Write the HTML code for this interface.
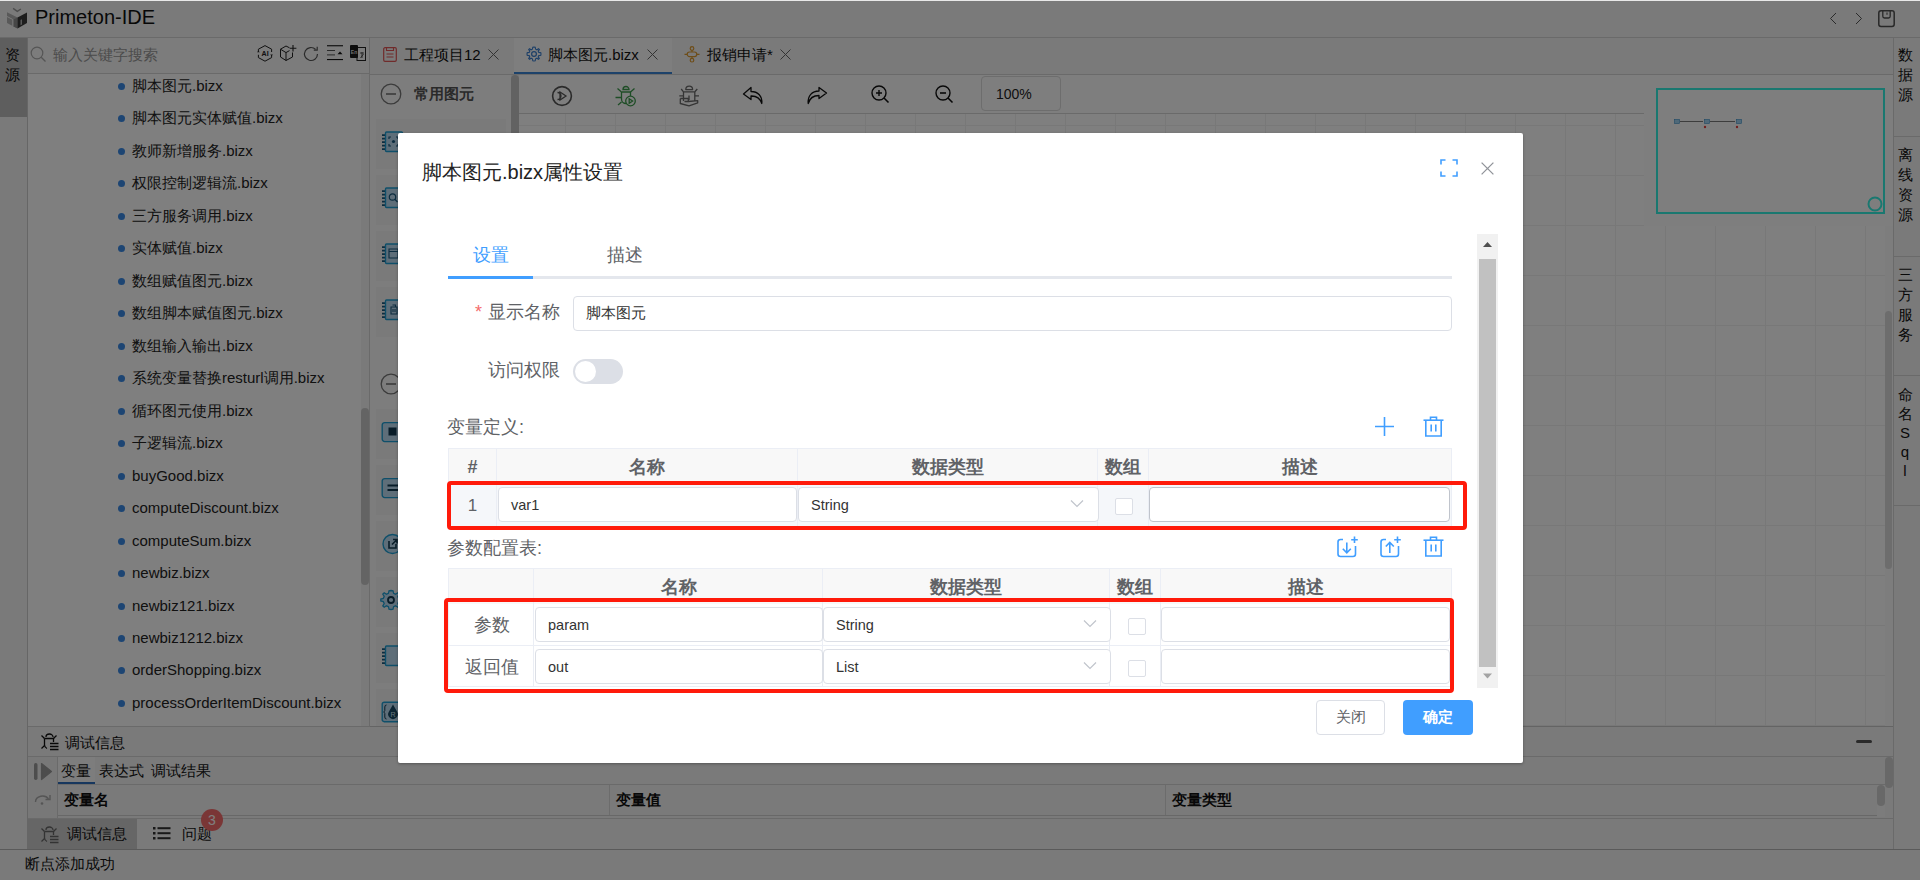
<!DOCTYPE html>
<html><head><meta charset="utf-8">
<style>
*{box-sizing:border-box;margin:0;padding:0}
html,body{width:1920px;height:880px;overflow:hidden;background:#fff;font-family:"Liberation Sans",sans-serif;color:#333}
.a{position:absolute}
.bd{border-color:#d4d4d4;border-style:solid;border-width:0}
svg{display:block}
#app{position:absolute;left:0;top:0;width:1920px;height:880px}
.tree div{position:absolute;left:132px;font-size:15px;color:#222;height:20px;line-height:20px;white-space:nowrap}
.tree div:before{content:"";position:absolute;left:-14px;top:7px;width:7px;height:7px;border-radius:50%;background:#3a8ae6}
.th{text-align:center;font-size:18px;line-height:24px;font-weight:bold;color:#606266}
.inp{border:1px solid #dcdfe6;border-radius:4px;background:#fff}
.it{font-size:14.5px;line-height:20px;color:#333}
.cb{width:18px;height:17px;border:1px solid #dcdfe6;border-radius:2px;background:#fff}
#ov{position:absolute;left:0;top:0;width:1920px;height:880px;background:rgba(0,0,0,.5)}
</style></head><body>
<div id="app">
  <!-- title bar -->
  <div class="a bd" style="left:0;top:0;width:1920px;height:38px;background:#f4f4f4;border-bottom-width:1px"></div>
  <div class="a" style="left:35px;top:5px;font-size:20px;line-height:24px;color:#111">Primeton-IDE</div>
  <!-- left strip -->
  <div class="a" style="left:0;top:38px;width:28px;height:811px;background:#f4f4f4;border-right:1px solid #cccccc"></div>
  <div class="a" style="left:0;top:38px;width:27px;height:79px;background:#bdbdbd"></div>
  <div class="a" style="left:5px;top:45px;width:16px;font-size:15px;line-height:20px;color:#111">资源</div>
  <!-- left panel -->
  <div class="a bd" style="left:28px;top:38px;width:342px;height:689px;background:#fff;border-right-width:1px;border-bottom-width:1px"></div>
  <div class="a bd" style="left:28px;top:38px;width:341px;height:36px;background:#f8f8f8;border-bottom-width:1px"></div>
  <div class="a" style="left:53px;top:45px;font-size:15px;line-height:20px;color:#999">输入关键字搜索</div>
  <div class="tree">
    <div style="top:76px">脚本图元.bizx</div>
    <div style="top:108px">脚本图元实体赋值.bizx</div>
    <div style="top:141px">教师新增服务.bizx</div>
    <div style="top:173px">权限控制逻辑流.bizx</div>
    <div style="top:206px">三方服务调用.bizx</div>
    <div style="top:238px">实体赋值.bizx</div>
    <div style="top:271px">数组赋值图元.bizx</div>
    <div style="top:303px">数组脚本赋值图元.bizx</div>
    <div style="top:336px">数组输入输出.bizx</div>
    <div style="top:368px">系统变量替换resturl调用.bizx</div>
    <div style="top:401px">循环图元使用.bizx</div>
    <div style="top:433px">子逻辑流.bizx</div>
    <div style="top:466px">buyGood.bizx</div>
    <div style="top:498px">computeDiscount.bizx</div>
    <div style="top:531px">computeSum.bizx</div>
    <div style="top:563px">newbiz.bizx</div>
    <div style="top:596px">newbiz121.bizx</div>
    <div style="top:628px">newbiz1212.bizx</div>
    <div style="top:660px">orderShopping.bizx</div>
    <div style="top:693px">processOrderItemDiscount.bizx</div>
  </div>

  <!-- title logo -->
  <svg class="a" style="left:6px;top:7px" width="23" height="23" viewBox="0 0 23 23">
    <path d="M7.1 1.4 L11.3 4.3 L14.9 2" fill="none" stroke="#9a9a9a" stroke-width="1.4"/>
    <path d="M1 5.2 L11.5 10.6 L11.5 21.5 L1 16 Z" fill="#b2b2b2"/>
    <path d="M7.5 12.5 L11.5 10.6 L11.5 21.5 L7.5 19.5 Z" fill="#8e8e8e"/>
    <path d="M11.5 10.6 L21 5.5 L21 16 L11.5 21.5 Z" fill="#3a3a3a"/>
    <path d="M1 9.5 L6.8 12.5 L6.8 19" fill="none" stroke="#f4f4f4" stroke-width="1"/>
    <path d="M14.5 13 L16 12.3 L16 17.5 L14.5 18.3 Z" fill="#b0b0b0"/>
  </svg>
  <!-- title right icons -->
  <svg class="a" style="left:1827px;top:11px" width="12" height="16" viewBox="0 0 12 16"><path d="M9 2 L3.5 7.5 L9 13" fill="none" stroke="#555" stroke-width="1"/></svg>
  <svg class="a" style="left:1853px;top:11px" width="12" height="16" viewBox="0 0 12 16"><path d="M3 2 L8.5 7.5 L3 13" fill="none" stroke="#555" stroke-width="1"/></svg>
  <svg class="a" style="left:1877px;top:9px" width="19" height="19" viewBox="0 0 19 19"><rect x="1.8" y="1.8" width="15.4" height="15.6" rx="2.2" fill="none" stroke="#505050" stroke-width="1.5"/><path d="M5.8 1.8 V7.3 Q5.8 9 7.5 9 H11.5 Q13.2 9 13.2 7.3 V1.8" fill="none" stroke="#505050" stroke-width="1.3"/><path d="M10 3.5 V5.8" stroke="#505050" stroke-width="1.1"/></svg>
  <!-- search icons -->
  <svg class="a" style="left:30px;top:46px" width="17" height="17" viewBox="0 0 17 17"><circle cx="7" cy="7" r="5.8" fill="none" stroke="#aaa" stroke-width="1.2"/><path d="M11.2 11.2 L15.5 15.5" stroke="#aaa" stroke-width="1.3"/></svg>
  <svg class="a" style="left:257px;top:45px" width="17" height="17" viewBox="0 0 17 17"><path d="M8 0.6 L14.6 4.2 V7 M14.6 10 V12.6 L8 16.2 L1.4 12.6 V9.8 M1.4 6.8 V4.2 L8 0.6" fill="none" stroke="#222" stroke-width="1"/><path d="M0 7.2 L1.4 5.8 L2.8 7.2 Z M13.2 9.6 L14.6 11 L16 9.6 Z" fill="#222"/><text x="8.1" y="11.2" font-size="7" font-weight="bold" text-anchor="middle" fill="#222" font-family="Liberation Sans">AI</text></svg>
  <svg class="a" style="left:280px;top:45px" width="17" height="17" viewBox="0 0 17 17"><path d="M9.5 2.8 L6 1 L0.5 4.2 V12 L6 15.5 L12.5 12 V7.5 M0.5 4.2 L6 7.6 L9.5 5.6 M6 7.6 V15.5" fill="none" stroke="#222" stroke-width="1"/><path d="M13 0 V6.5 M9.8 3.2 H16.4" stroke="#222" stroke-width="1.1"/></svg>
  <svg class="a" style="left:303px;top:46px" width="16" height="16" viewBox="0 0 16 16"><path d="M14.5 8 A6.5 6.5 0 1 1 12.6 3.4" fill="none" stroke="#555" stroke-width="1.2"/><path d="M14.2 0.8 V4.2 H10.8" fill="none" stroke="#555" stroke-width="1.2"/></svg>
  <svg class="a" style="left:327px;top:45px" width="16" height="16" viewBox="0 0 16 16"><rect x="0" y="0.2" width="16" height="1.1" fill="#111"/><rect x="0" y="14" width="16" height="1.1" fill="#111"/><rect x="0" y="5" width="8" height="1" fill="#555"/><rect x="0" y="9.4" width="8" height="1" fill="#555"/><path d="M10.5 9.2 L13 6.4 L15.5 9.2 Z" fill="#111"/></svg>
  <svg class="a" style="left:350px;top:45px" width="16" height="16" viewBox="0 0 16 16"><rect x="7" y="2.5" width="8.5" height="13" fill="none" stroke="#222" stroke-width="1"/><rect x="0" y="0" width="8" height="13" rx="1" fill="#1a1a1a"/><text x="4" y="8.5" font-size="5" font-weight="bold" text-anchor="middle" fill="#ddd" font-family="Liberation Sans">En</text><path d="M10 8 H14 M12 7 V13 M10.5 13 L13.5 9" stroke="#333" stroke-width="0.8"/></svg>
  <!-- left panel scrollbar -->
  <div class="a" style="left:361px;top:74px;width:8px;height:652px;background:#f4f4f4"></div>
  <div class="a" style="left:361px;top:408px;width:8px;height:177px;background:#c9c9c9;border-radius:4px"></div>

  <!-- editor tab bar -->
  <div class="a bd" style="left:370px;top:38px;width:1523px;height:37px;background:#f4f4f4;border-bottom-width:1px"></div>
  <div class="a" style="left:514px;top:38px;width:158px;height:36px;background:#fdfdfd"></div>
  <div class="a" style="left:514px;top:72px;width:158px;height:2px;background:#3a84d4"></div>
  <svg class="a" style="left:383px;top:47px" width="14" height="15" viewBox="0 0 14 15"><path d="M2 0.7 H12 A1.3 1.3 0 0 1 13.3 2 V13 A1.3 1.3 0 0 1 12 14.3 H2 A1.3 1.3 0 0 1 0.7 13 V2 A1.3 1.3 0 0 1 2 0.7 Z" fill="none" stroke="#e05656" stroke-width="1.2"/><path d="M3.5 0.7 V3.5 H10.5 V0.7 M3.5 7 H10.5 M3.5 10 H10.5" fill="none" stroke="#e05656" stroke-width="1.1"/></svg>
  <div class="a" style="left:404px;top:45px;font-size:15px;line-height:20px;color:#111">工程项目12</div>
  <svg class="a" style="left:488px;top:49px" width="11" height="11" viewBox="0 0 11 11"><path d="M0.5 0.5 L10.5 10.5 M10.5 0.5 L0.5 10.5" stroke="#666" stroke-width="1"/></svg>
  <svg class="a" style="left:526px;top:46px" width="16" height="16" viewBox="0 0 16 16"><path d="M8 1 L9.2 1.2 L9.6 3.2 L10.9 3.8 L12.6 2.7 L13.4 3.5 L13.3 3.6 L12.2 5.1 L12.8 6.4 L14.8 6.8 L15 8 L14.8 9.2 L12.8 9.6 L12.2 10.9 L13.3 12.5 L12.5 13.3 L10.9 12.2 L9.6 12.8 L9.2 14.8 L8 15 L6.8 14.8 L6.4 12.8 L5.1 12.2 L3.5 13.3 L2.7 12.5 L3.8 10.9 L3.2 9.6 L1.2 9.2 L1 8 L1.2 6.8 L3.2 6.4 L3.8 5.1 L2.7 3.5 L3.5 2.7 L5.1 3.8 L6.4 3.2 L6.8 1.2 Z" fill="none" stroke="#3a7fd0" stroke-width="1.1"/><circle cx="8" cy="8" r="2.4" fill="none" stroke="#3a7fd0" stroke-width="1.2"/></svg>
  <div class="a" style="left:548px;top:45px;font-size:15px;line-height:20px;color:#111">脚本图元.bizx</div>
  <svg class="a" style="left:647px;top:49px" width="11" height="11" viewBox="0 0 11 11"><path d="M0.5 0.5 L10.5 10.5 M10.5 0.5 L0.5 10.5" stroke="#666" stroke-width="1"/></svg>
  <svg class="a" style="left:684px;top:46px" width="16" height="17" viewBox="0 0 16 17"><g fill="none" stroke="#dc9a30" stroke-width="1.2"><circle cx="8" cy="2.5" r="1.8"/><path d="M8 4.3 V6"/><rect x="3.2" y="6" width="9.6" height="4.6" rx="2.3"/><path d="M8 10.6 V12.4"/><circle cx="8" cy="14.2" r="1.8"/><path d="M0.5 8.3 H3.2 M12.8 8.3 H15.5"/></g></svg>
  <div class="a" style="left:707px;top:45px;font-size:15px;line-height:20px;color:#111">报销申请*</div>
  <svg class="a" style="left:780px;top:49px" width="11" height="11" viewBox="0 0 11 11"><path d="M0.5 0.5 L10.5 10.5 M10.5 0.5 L0.5 10.5" stroke="#666" stroke-width="1"/></svg>

  <!-- palette -->
  <div class="a bd" style="left:370px;top:75px;width:149px;height:652px;background:#fafafa;border-bottom-width:1px"></div>
  <svg class="a" style="left:380px;top:83px" width="22" height="22" viewBox="0 0 22 22"><circle cx="11" cy="11" r="9.8" fill="none" stroke="#777" stroke-width="1.3"/><path d="M6 11 H16" stroke="#777" stroke-width="1.6"/></svg>
  <div class="a" style="left:414px;top:84px;font-size:15px;line-height:20px;font-weight:bold;color:#555">常用图元</div>
  <div class="a" style="left:511px;top:75px;width:8px;height:651px;background:#efefef"></div>
  <div class="a" style="left:511px;top:75px;width:8px;height:300px;background:#c4c4c4;border-radius:4px"></div>
  
<div class="a" style="left:370px;top:75px;width:141px;height:651px;overflow:hidden"><div class="a" style="left:6px;top:44px;width:130px;height:50px;background:#f4f4f4"></div><div class="a" style="left:6px;top:100px;width:130px;height:50px;background:#f4f4f4"></div><div class="a" style="left:6px;top:156px;width:130px;height:50px;background:#f4f4f4"></div><div class="a" style="left:6px;top:212px;width:130px;height:50px;background:#f4f4f4"></div><div class="a" style="left:6px;top:334px;width:130px;height:50px;background:#f4f4f4"></div><div class="a" style="left:6px;top:390px;width:130px;height:50px;background:#f4f4f4"></div><div class="a" style="left:6px;top:446px;width:130px;height:50px;background:#f4f4f4"></div><div class="a" style="left:6px;top:502px;width:130px;height:50px;background:#f4f4f4"></div><div class="a" style="left:6px;top:558px;width:130px;height:50px;background:#f4f4f4"></div><div class="a" style="left:6px;top:614px;width:130px;height:50px;background:#f4f4f4"></div></div>
<svg class="a" style="left:380px;top:131px" width="24" height="22" viewBox="0 0 24 22"><g fill="#1a5a80"><path d="M2 3.2 H5.5 V5 H2 Z M2 6.7 H5.5 V8.5 H2 Z M2 10.2 H5.5 V12 H2 Z M2 13.7 H5.5 V15.5 H2 Z M2 17.2 H5.5 V19 H2 Z"/></g><rect x="5.5" y="1" width="17" height="19.5" rx="1" fill="#bcdcf2" stroke="#1e9fd4" stroke-width="1.4"/><path d="M9 8 V6 H11 M16 6 H18 V8 M18 13 V15 H16 M11 15 H9 V13" fill="none" stroke="#1a5a80" stroke-width="1.2"/><circle cx="13.5" cy="10.5" r="1.6" fill="#1a5a80"/></svg><svg class="a" style="left:380px;top:187px" width="24" height="22" viewBox="0 0 24 22"><g fill="#1a5a80"><path d="M2 3.2 H5.5 V5 H2 Z M2 6.7 H5.5 V8.5 H2 Z M2 10.2 H5.5 V12 H2 Z M2 13.7 H5.5 V15.5 H2 Z M2 17.2 H5.5 V19 H2 Z"/></g><rect x="5.5" y="1" width="17" height="19.5" rx="1" fill="#bcdcf2" stroke="#1e9fd4" stroke-width="1.4"/><circle cx="12.5" cy="10" r="3.2" fill="none" stroke="#1a5a80" stroke-width="1.2"/><path d="M14.8 12.3 L17.5 15" stroke="#1a5a80" stroke-width="1.3"/></svg><svg class="a" style="left:380px;top:243px" width="24" height="22" viewBox="0 0 24 22"><g fill="#1a5a80"><path d="M2 3.2 H5.5 V5 H2 Z M2 6.7 H5.5 V8.5 H2 Z M2 10.2 H5.5 V12 H2 Z M2 13.7 H5.5 V15.5 H2 Z M2 17.2 H5.5 V19 H2 Z"/></g><rect x="5.5" y="1" width="17" height="19.5" rx="1" fill="#bcdcf2" stroke="#1e9fd4" stroke-width="1.4"/><path d="M9 6 H18 V15 H9 Z M9 8.5 H18" fill="none" stroke="#1a5a80" stroke-width="1.1"/></svg><svg class="a" style="left:380px;top:299px" width="24" height="22" viewBox="0 0 24 22"><g fill="#1a5a80"><path d="M2 3.2 H5.5 V5 H2 Z M2 6.7 H5.5 V8.5 H2 Z M2 10.2 H5.5 V12 H2 Z M2 13.7 H5.5 V15.5 H2 Z M2 17.2 H5.5 V19 H2 Z"/></g><rect x="5.5" y="1" width="17" height="19.5" rx="1" fill="#bcdcf2" stroke="#1e9fd4" stroke-width="1.4"/><path d="M11 8 H17 V15 H11 Z M12.5 6 H15.5 V8 M13 10 V13 M15 10 V13" fill="none" stroke="#1a5a80" stroke-width="1.1"/></svg><svg class="a" style="left:381px;top:421px" width="24" height="22" viewBox="0 0 24 22"><rect x="1.2" y="1.6" width="21" height="19" rx="2.5" fill="#bcdcf2" stroke="#1e9fd4" stroke-width="1.4"/><rect x="7.5" y="6.5" width="8" height="8" fill="#123a52"/></svg><svg class="a" style="left:381px;top:477px" width="24" height="22" viewBox="0 0 24 22"><rect x="1.2" y="1.6" width="21" height="19" rx="2.5" fill="#bcdcf2" stroke="#1e9fd4" stroke-width="1.4"/><path d="M6.5 8.5 H17 M6.5 13 H17" stroke="#123a52" stroke-width="2"/></svg><svg class="a" style="left:381px;top:533px" width="24" height="22" viewBox="0 0 24 22"><circle cx="11.5" cy="11" r="9.5" fill="#bcdcf2" stroke="#1e9fd4" stroke-width="1.4"/><path d="M8 8 V15 H15 V11 M12 6.5 H16 V10.5 M16 6.5 L11 11.5" fill="none" stroke="#123a52" stroke-width="1.6"/></svg><svg class="a" style="left:380px;top:589px" width="24" height="22" viewBox="0 0 24 22"><path d="M11 1.5 L13 1.8 L13.6 4.3 L15.5 5.2 L17.8 3.8 L19.2 5.2 L17.8 7.5 L18.7 9.4 L21.2 10 L21.2 12 L18.7 12.6 L17.8 14.5 L19.2 16.8 L17.8 18.2 L15.5 16.8 L13.6 17.7 L13 20.2 L11 20.5 L9 20.2 L8.4 17.7 L6.5 16.8 L4.2 18.2 L2.8 16.8 L4.2 14.5 L3.3 12.6 L0.8 12 L0.8 10 L3.3 9.4 L4.2 7.5 L2.8 5.2 L4.2 3.8 L6.5 5.2 L8.4 4.3 L9 1.8 Z" fill="#bcdcf2" stroke="#1e9fd4" stroke-width="1.3"/><circle cx="11" cy="11" r="3" fill="none" stroke="#123a52" stroke-width="1.8"/></svg><svg class="a" style="left:380px;top:645px" width="24" height="22" viewBox="0 0 24 22"><g fill="#1a5a80"><path d="M2 3.2 H5.5 V5 H2 Z M2 6.7 H5.5 V8.5 H2 Z M2 10.2 H5.5 V12 H2 Z M2 13.7 H5.5 V15.5 H2 Z M2 17.2 H5.5 V19 H2 Z"/></g><rect x="5.5" y="1" width="17" height="19.5" rx="1" fill="#bcdcf2" stroke="#1e9fd4" stroke-width="1.4"/></svg><svg class="a" style="left:381px;top:701px" width="24" height="22" viewBox="0 0 24 22"><rect x="1.2" y="1.2" width="21" height="19.5" rx="2" fill="#bcdcf2" stroke="#1e9fd4" stroke-width="1.4"/><path d="M5.5 4 Q3.8 4 3.8 6 V9.5 L2.8 11 L3.8 12.5 V16 Q3.8 18 5.5 18" fill="none" stroke="#123a52" stroke-width="1"/><path d="M12 3.5 L16 10.5 A4.8 4.8 0 1 1 8 10.5 Z" fill="#1a4a66"/><text x="12" y="16.2" font-size="7" text-anchor="middle" fill="#cfe6f5" font-family="Liberation Sans">R</text></svg>
  <svg class="a" style="left:380px;top:373px" width="22" height="22" viewBox="0 0 22 22"><circle cx="11" cy="11" r="9.8" fill="none" stroke="#777" stroke-width="1.3"/><path d="M6 11 H16" stroke="#777" stroke-width="1.6"/></svg>

  <!-- canvas toolbar -->
  <div class="a bd" style="left:519px;top:75px;width:1125px;height:39px;background:#fdfdfd;border-bottom-width:1px"></div>
  <div class="a" style="left:519px;top:114px;width:1374px;height:613px;background-color:#fefefe;background-image:linear-gradient(to right,#f0f0f0 1px,transparent 1px),linear-gradient(to bottom,#f0f0f0 1px,transparent 1px);background-size:50px 50px;background-position:46px 11px"></div>
  <div class="a" style="left:1644px;top:75px;width:249px;height:151px;background:#fdfdfd"></div>
  <svg class="a" style="left:551px;top:85px" width="22" height="22" viewBox="0 0 22 22"><circle cx="11" cy="11" r="9.4" fill="none" stroke="#555" stroke-width="1.6"/><path d="M6.5 7.5 A3.5 3.5 0 0 1 6.5 14.5 M9 7 L15 11 L9 15 Z" fill="none" stroke="#555" stroke-width="1.3"/></svg>
  <svg class="a" style="left:615px;top:85px" width="22" height="22" viewBox="0 0 22 22"><g fill="none" stroke="#3d9a4c" stroke-width="1.3"><path d="M8 4.5 A3 3 0 0 1 14 4.5 Z"/><path d="M6.5 7 H15.5 V11 M6.5 7 V14 A4.5 4.5 0 0 0 11 18.5"/><path d="M2.5 3.5 L6.5 7 M19.5 3.5 L15.5 7 M0.5 12.5 H6.5 M3 20 L6.5 17"/><circle cx="15.5" cy="16" r="4.8"/><path d="M14.2 13.8 L17.6 16 L14.2 18.2 Z"/></g></svg>
  <svg class="a" style="left:677px;top:85px" width="23" height="22" viewBox="0 0 23 22"><g fill="none" stroke="#6a6a6a" stroke-width="1.3" stroke-linejoin="round"><path d="M8.8 4.6 A3.4 3.4 0 0 1 15.6 4.6 Z"/><path d="M6.5 16 V6.8 H17.8 V16"/><path d="M4.2 4 L6.5 6.8 M20.3 4 L17.8 6.8 M2.3 10.8 H6.5 M17.8 10.8 H22 M12 10.5 V15"/><path d="M3.3 13.5 H11.3 V16.5 H7.5"/><path d="M3.3 13.5 V18.5 L12 20.8 L20.7 17.8 V15.6 L11.3 16.5"/></g></svg>
  <svg class="a" style="left:742px;top:86px" width="22" height="19" viewBox="0 0 22 19"><path d="M9 1.5 L1.5 8 L9 13.5 V10 C14 9.8 18 12 19.8 17.5 C20.5 10 16 5.5 9 5.5 Z" fill="none" stroke="#111" stroke-width="1.3" stroke-linejoin="round"/></svg>
  <svg class="a" style="left:806px;top:86px" width="22" height="19" viewBox="0 0 22 19"><path d="M13 1.5 L20.5 7 L13 12.5 V9.5 C8 9.5 4 11 2.2 17.5 C1.5 10 6 5 13 5 Z" fill="none" stroke="#111" stroke-width="1.3" stroke-linejoin="round"/></svg>
  <svg class="a" style="left:871px;top:85px" width="19" height="19" viewBox="0 0 19 19"><circle cx="8" cy="8" r="7" fill="none" stroke="#111" stroke-width="1.4"/><path d="M13 13 L17.5 17.5" stroke="#111" stroke-width="1.6"/><path d="M5 8 H11 M8 5 V11" stroke="#111" stroke-width="1.4"/></svg>
  <svg class="a" style="left:935px;top:85px" width="19" height="19" viewBox="0 0 19 19"><circle cx="8" cy="8" r="7" fill="none" stroke="#111" stroke-width="1.4"/><path d="M13 13 L17.5 17.5" stroke="#111" stroke-width="1.6"/><path d="M5 8 H11" stroke="#111" stroke-width="1.6"/></svg>
  <div class="a" style="left:981px;top:76px;width:80px;height:35px;border:1px solid #dadada;border-radius:4px;background:#fdfdfd"></div>
  <div class="a" style="left:996px;top:85px;font-size:14px;line-height:18px;color:#222">100%</div>

  <!-- minimap -->
  <div class="a" style="left:1656px;top:88px;width:229px;height:126px;border:2px solid #35f0e0"></div>
  <svg class="a" style="left:1865px;top:194px" width="20" height="20" viewBox="0 0 20 20"><circle cx="10" cy="10" r="6.5" fill="none" stroke="#35f0e0" stroke-width="2"/></svg>
  <svg class="a" style="left:1674px;top:118px" width="72" height="14" viewBox="0 0 72 14"><rect x="0.5" y="1.5" width="5" height="4" fill="#9fd3f2" stroke="#3a8fc8" stroke-width="0.6"/><rect x="30.5" y="1.5" width="5" height="4" fill="#9fd3f2" stroke="#3a8fc8" stroke-width="0.6"/><rect x="62.5" y="1.5" width="5" height="4" fill="#9fd3f2" stroke="#3a8fc8" stroke-width="0.6"/><path d="M6 3.5 H29 M36 3.5 H61" stroke="#222" stroke-width="0.6"/><circle cx="31" cy="9" r="1.2" fill="#e04040"/><circle cx="63" cy="9" r="1.2" fill="#e04040"/></svg>
  <!-- canvas scrollbar -->
  <div class="a" style="left:1885px;top:226px;width:8px;height:501px;background:#fbfbfb"></div>
  <div class="a" style="left:1885px;top:311px;width:7px;height:258px;background:#dadada;border-radius:4px"></div>

  <!-- right strip -->
  <div class="a bd" style="left:1893px;top:38px;width:27px;height:811px;background:#f4f4f4;border-left-width:1px"></div>
  <div class="a bd" style="left:1893px;top:136px;width:27px;height:1px;background:#d4d4d4"></div>
  <div class="a bd" style="left:1893px;top:256px;width:27px;height:1px;background:#d4d4d4"></div>
  <div class="a bd" style="left:1893px;top:375px;width:27px;height:1px;background:#d4d4d4"></div>
  <div class="a bd" style="left:1893px;top:505px;width:27px;height:1px;background:#d4d4d4"></div>
  <div class="a" style="left:1898px;top:45px;width:16px;font-size:15px;line-height:20px;color:#111">数据源</div>
  <div class="a" style="left:1898px;top:145px;width:16px;font-size:15px;line-height:20px;color:#111">离线资源</div>
  <div class="a" style="left:1898px;top:265px;width:16px;font-size:15px;line-height:20px;color:#111">三方服务</div>
  <div class="a" style="left:1897px;top:385px;width:16px;font-size:15px;line-height:19px;color:#111;text-align:center">命名<br>S<br>q<br>l</div>

  <!-- bottom panel -->
  <div class="a bd" style="left:28px;top:727px;width:1865px;height:122px;background:#f4f4f4"></div>
  <div class="a" style="left:370px;top:726px;width:1523px;height:1px;background:#c8c8c8"></div>
  <div class="a bd" style="left:28px;top:756px;width:1865px;height:1px;background:#d4d4d4"></div>
  <svg class="a" style="left:41px;top:733px" width="18" height="18" viewBox="0 0 18 18"><g fill="none" stroke="#111" stroke-width="1.3"><path d="M5 4 A3.5 3 0 0 1 12 4"/><path d="M3.5 5.5 H12.5 V9 M3.5 5.5 V12 A4 4 0 0 0 6 15.5"/><path d="M0.5 2.5 L3.5 5.5 M15.5 2.5 L12.5 5.5 M0.5 15.5 L3.5 12.5"/><path d="M9 10.5 H17.5 M9 13.5 H17.5 M9 16.5 H17.5"/></g></svg>
  <div class="a" style="left:65px;top:733px;font-size:15px;line-height:20px;color:#111">调试信息</div>
  <div class="a" style="left:1856px;top:740px;width:16px;height:3px;border-radius:1.5px;background:#555"></div>
  <div class="a bd" style="left:28px;top:757px;width:30px;height:61px;background:#f0f0f0;border-right-width:1px"></div>
  <svg class="a" style="left:33px;top:762px" width="20" height="19" viewBox="0 0 20 19"><rect x="1" y="1" width="3.5" height="17" rx="1.7" fill="#9a9a9a"/><path d="M8.5 1.5 L18.5 9.5 L8.5 17.5 Z" fill="#9a9a9a" stroke="#9a9a9a" stroke-width="1.2" stroke-linejoin="round"/></svg>
  <svg class="a" style="left:34px;top:793px" width="18" height="14" viewBox="0 0 18 14"><path d="M1.5 9 A7 6 0 0 1 14.5 6" fill="none" stroke="#aaa" stroke-width="1.4"/><path d="M11.5 6.5 H16 V2" fill="none" stroke="#aaa" stroke-width="1.4"/><circle cx="8" cy="10.5" r="1.3" fill="#aaa"/></svg>
  <div class="a" style="left:58px;top:757px;width:37px;height:27px;background:#fbfbfb"></div>
  <div class="a" style="left:58px;top:782px;width:37px;height:2px;background:#2f6fbd"></div>
  <div class="a bd" style="left:58px;top:784px;width:1835px;height:1px;background:#d4d4d4"></div>
  <div class="a" style="left:61px;top:761px;font-size:15px;line-height:20px;color:#111">变量</div>
  <div class="a" style="left:99px;top:761px;font-size:15px;line-height:20px;color:#111">表达式</div>
  <div class="a" style="left:151px;top:761px;font-size:15px;line-height:20px;color:#111">调试结果</div>
  <div class="a" style="left:64px;top:790px;font-size:15px;line-height:20px;color:#111;font-weight:bold">变量名</div>
  <div class="a" style="left:616px;top:790px;font-size:15px;line-height:20px;color:#111;font-weight:bold">变量值</div>
  <div class="a" style="left:1172px;top:790px;font-size:15px;line-height:20px;color:#111;font-weight:bold">变量类型</div>
  <div class="a" style="left:609px;top:785px;width:1px;height:30px;background:#d8d8d8"></div>
  <div class="a" style="left:1165px;top:785px;width:1px;height:30px;background:#d8d8d8"></div>
  <div class="a bd" style="left:58px;top:815px;width:1819px;height:1px;background:#d0d0d0"></div>
  <div class="a bd" style="left:28px;top:818px;width:1865px;height:1px;background:#d4d4d4"></div>
  <div class="a" style="left:1877px;top:785px;width:8px;height:32px;background:#f8f8f8"></div><div class="a" style="left:1885px;top:757px;width:8px;height:31px;background:#d0d0d0;border-radius:4px"></div>
  <div class="a" style="left:1877px;top:785px;width:8px;height:21px;background:#d0d0d0;border-radius:4px"></div>
  <div class="a" style="left:28px;top:819px;width:109px;height:30px;background:#cccccc"></div>
  <svg class="a" style="left:41px;top:826px" width="18" height="18" viewBox="0 0 18 18"><g fill="none" stroke="#666" stroke-width="1.3"><path d="M5 4 A3.5 3 0 0 1 12 4"/><path d="M3.5 5.5 H12.5 V9 M3.5 5.5 V12 A4 4 0 0 0 6 15.5"/><path d="M0.5 2.5 L3.5 5.5 M15.5 2.5 L12.5 5.5 M0.5 15.5 L3.5 12.5"/><path d="M9 10.5 H17.5 M9 13.5 H17.5 M9 16.5 H17.5"/></g></svg>
  <div class="a" style="left:67px;top:824px;font-size:15px;line-height:20px;color:#111">调试信息</div>
  <svg class="a" style="left:153px;top:826px" width="18" height="15" viewBox="0 0 18 15"><g fill="#333"><rect x="0" y="1" width="2.5" height="2.5"/><rect x="0" y="6" width="2.5" height="2.5"/><rect x="0" y="11" width="2.5" height="2.5"/><rect x="4.5" y="1.2" width="13" height="2"/><rect x="4.5" y="6.2" width="13" height="2"/><rect x="4.5" y="11.2" width="13" height="2"/></g></svg>
  <div class="a" style="left:182px;top:824px;font-size:15px;line-height:20px;color:#111">问题</div>
  <div class="a" style="left:201px;top:809px;width:22px;height:22px;border-radius:50%;background:#f56c6c;color:#fff;font-size:14px;line-height:22px;text-align:center">3</div>
  <!-- status bar -->
  <div class="a" style="left:0;top:849px;width:1920px;height:31px;background:#f4f4f4;border-top:1px solid #b4b4b4"></div>
  <div class="a" style="left:25px;top:854px;font-size:15px;line-height:20px;color:#111">断点添加成功</div>
</div>
<div id="ov"></div>
<div class="a" style="left:0;top:0;width:1920px;height:1px;background:#e8e8e8"></div>
<!-- modal -->
<div class="a" style="left:398px;top:133px;width:1125px;height:630px;background:#fff;border-radius:2px;box-shadow:0 1px 3px rgba(0,0,0,.3)"></div>
<div id="md">
  <div class="a" style="left:422px;top:160px;font-size:20px;line-height:24px;color:#222">脚本图元.bizx属性设置</div>
  <svg class="a" style="left:1440px;top:159px" width="18" height="18" viewBox="0 0 18 18"><path d="M1 5.5 V1 H5.5 M12.5 1 H17 V5.5 M17 12.5 V17 H12.5 M5.5 17 H1 V12.5" fill="none" stroke="#409eff" stroke-width="1.6"/></svg>
  <svg class="a" style="left:1481px;top:162px" width="13" height="13" viewBox="0 0 13 13"><path d="M0.6 0.6 L12.4 12.4 M12.4 0.6 L0.6 12.4" stroke="#909399" stroke-width="1.3"/></svg>
  <!-- scrollbar -->
  <div class="a" style="left:1477px;top:234px;width:21px;height:454px;background:#f1f1f1"></div>
  <div class="a" style="left:1479px;top:259px;width:17px;height:408px;background:#c1c1c1"></div>
  <svg class="a" style="left:1481px;top:240px" width="13" height="9" viewBox="0 0 13 9"><path d="M2 7 L6.5 2 L11 7 Z" fill="#505050"/></svg>
  <svg class="a" style="left:1481px;top:671px" width="13" height="9" viewBox="0 0 13 9"><path d="M2 2.5 L6.5 7.5 L11 2.5 Z" fill="#a3a3a3"/></svg>
  <!-- tabs -->
  <div class="a" style="left:473px;top:243px;font-size:18px;line-height:24px;color:#409eff">设置</div>
  <div class="a" style="left:607px;top:243px;font-size:18px;line-height:24px;color:#606266">描述</div>
  <div class="a" style="left:448px;top:276px;width:1004px;height:3px;background:#e4e7ed"></div>
  <div class="a" style="left:448px;top:276px;width:85px;height:3px;background:#409eff"></div>
  <!-- form -->
  <div class="a" style="left:475px;top:302px;font-size:18px;line-height:20px;color:#f56c6c">*</div>
  <div class="a" style="left:488px;top:300px;font-size:18px;line-height:24px;color:#606266">显示名称</div>
  <div class="a" style="left:573px;top:296px;width:879px;height:35px;border:1px solid #dcdfe6;border-radius:4px"></div>
  <div class="a" style="left:586px;top:303px;font-size:15px;line-height:20px;color:#333">脚本图元</div>
  <div class="a" style="left:488px;top:358px;font-size:18px;line-height:24px;color:#606266">访问权限</div>
  <div class="a" style="left:573px;top:359px;width:50px;height:25px;border-radius:13px;background:#dcdfe6"></div>
  <div class="a" style="left:575px;top:361px;width:21px;height:21px;border-radius:50%;background:#fff"></div>
  <!-- var def -->
  <div class="a" style="left:447px;top:415px;font-size:18px;line-height:24px;color:#606266">变量定义:</div>
  <svg class="a" style="left:1375px;top:417px" width="19" height="19" viewBox="0 0 19 19"><path d="M9.5 0 V19 M0 9.5 H19" stroke="#409eff" stroke-width="1.6"/></svg>
  <svg class="a" style="left:1423px;top:416px" width="21" height="21" viewBox="0 0 21 21"><g fill="none" stroke="#409eff" stroke-width="1.6"><path d="M0.5 4.2 H20.5"/><path d="M7.5 4 V1.2 H13.5 V4"/><path d="M2.8 4.2 V20 H18.2 V4.2"/><path d="M8.2 8.5 V15.5 M12.8 8.5 V15.5"/></g></svg>
  <!-- table 1 -->
  <div class="a" style="left:448px;top:448px;width:1004px;height:79px;border:1px solid #ebeef5"></div>
  <div class="a" style="left:449px;top:449px;width:1002px;height:35px;background:#f8f8f8"></div>
  <div class="a" style="left:449px;top:484px;width:1002px;height:42px;background:#f5f7fa"></div>
  <div class="a" style="left:496px;top:449px;width:1px;height:77px;background:#ebeef5"></div>
  <div class="a" style="left:797px;top:449px;width:1px;height:77px;background:#ebeef5"></div>
  <div class="a" style="left:1097px;top:449px;width:1px;height:77px;background:#ebeef5"></div>
  <div class="a" style="left:1148px;top:449px;width:1px;height:77px;background:#ebeef5"></div>
  <div class="a th" style="left:449px;top:455px;width:47px">#</div>
  <div class="a th" style="left:497px;top:455px;width:300px">名称</div>
  <div class="a th" style="left:798px;top:455px;width:299px">数据类型</div>
  <div class="a th" style="left:1098px;top:455px;width:50px">数组</div>
  <div class="a th" style="left:1149px;top:455px;width:302px">描述</div>
  <div class="a" style="left:449px;top:495px;width:47px;text-align:center;font-size:17px;line-height:22px;color:#606266">1</div>
  <div class="a inp" style="left:498px;top:487px;width:299px;height:35px"></div>
  <div class="a it" style="left:511px;top:495px">var1</div>
  <div class="a inp" style="left:798px;top:487px;width:301px;height:35px"></div>
  <div class="a it" style="left:811px;top:495px">String</div>
  <svg class="a chev" style="left:1070px;top:499px" width="14" height="9" viewBox="0 0 14 9"><path d="M1 1.5 L7 7.5 L13 1.5" fill="none" stroke="#c0c4cc" stroke-width="1.2"/></svg>
  <div class="a cb" style="left:1115px;top:498px"></div>
  <div class="a inp" style="left:1149px;top:487px;width:301px;height:35px;border-color:#c0c4cc"></div>
  <!-- red box 1 -->
  <div class="a" style="left:447px;top:481px;width:1020px;height:49px;border:4px solid #ff1a0a;border-radius:4px"></div>
  <!-- params -->
  <div class="a" style="left:447px;top:536px;font-size:18px;line-height:24px;color:#606266">参数配置表:</div>
  <svg class="a" style="left:1337px;top:536px" width="22" height="22" viewBox="0 0 22 22"><g fill="none" stroke="#409eff" stroke-width="1.6"><path d="M6 3.5 H3.5 A2.5 2.5 0 0 0 1 6 V18 A2.5 2.5 0 0 0 3.5 20.5 H16 A2.5 2.5 0 0 0 18.5 18 V10"/><path d="M9.8 6.5 V16.5 M5.8 12.8 L9.8 16.8 L13.8 12.8"/><path d="M17.5 0.5 V7 M14.2 3.8 H20.8"/></g></svg>
  <svg class="a" style="left:1380px;top:536px" width="22" height="22" viewBox="0 0 22 22"><g fill="none" stroke="#409eff" stroke-width="1.6"><path d="M6 3.5 H3.5 A2.5 2.5 0 0 0 1 6 V18 A2.5 2.5 0 0 0 3.5 20.5 H16 A2.5 2.5 0 0 0 18.5 18 V10"/><path d="M9.8 17 V6.5 M5.8 10.5 L9.8 6.5 L13.8 10.5"/><path d="M17.5 0.5 V7 M14.2 3.8 H20.8"/></g></svg>
  <svg class="a" style="left:1423px;top:536px" width="21" height="21" viewBox="0 0 21 21"><g fill="none" stroke="#409eff" stroke-width="1.6"><path d="M0.5 4.2 H20.5"/><path d="M7.5 4 V1.2 H13.5 V4"/><path d="M2.8 4.2 V20 H18.2 V4.2"/><path d="M8.2 8.5 V15.5 M12.8 8.5 V15.5"/></g></svg>
  <!-- table 2 -->
  <div class="a" style="left:448px;top:568px;width:1004px;height:119px;border:1px solid #ebeef5"></div>
  <div class="a" style="left:449px;top:569px;width:1002px;height:35px;background:#f8f8f8"></div>
  <div class="a" style="left:449px;top:645px;width:1002px;height:1px;background:#ebeef5"></div>
  <div class="a" style="left:533px;top:569px;width:1px;height:117px;background:#ebeef5"></div>
  <div class="a" style="left:822px;top:569px;width:1px;height:117px;background:#ebeef5"></div>
  <div class="a" style="left:1109px;top:569px;width:1px;height:117px;background:#ebeef5"></div>
  <div class="a" style="left:1160px;top:569px;width:1px;height:117px;background:#ebeef5"></div>
  <div class="a th" style="left:535px;top:575px;width:287px">名称</div>
  <div class="a th" style="left:823px;top:575px;width:286px">数据类型</div>
  <div class="a th" style="left:1110px;top:575px;width:50px">数组</div>
  <div class="a th" style="left:1161px;top:575px;width:290px">描述</div>
  <div class="a" style="left:449px;top:613px;width:85px;text-align:center;font-size:18px;line-height:24px;color:#606266">参数</div>
  <div class="a" style="left:449px;top:655px;width:85px;text-align:center;font-size:18px;line-height:24px;color:#606266">返回值</div>
  <div class="a inp" style="left:535px;top:607px;width:288px;height:35px"></div>
  <div class="a it" style="left:548px;top:615px">param</div>
  <div class="a inp" style="left:823px;top:607px;width:288px;height:35px"></div>
  <div class="a it" style="left:836px;top:615px">String</div>
  <svg class="a chev" style="left:1083px;top:619px" width="14" height="9" viewBox="0 0 14 9"><path d="M1 1.5 L7 7.5 L13 1.5" fill="none" stroke="#c0c4cc" stroke-width="1.2"/></svg>
  <div class="a cb" style="left:1128px;top:618px"></div>
  <div class="a inp" style="left:1161px;top:607px;width:289px;height:35px"></div>
  <div class="a inp" style="left:535px;top:649px;width:288px;height:35px"></div>
  <div class="a it" style="left:548px;top:657px">out</div>
  <div class="a inp" style="left:823px;top:649px;width:288px;height:35px"></div>
  <div class="a it" style="left:836px;top:657px">List</div>
  <svg class="a chev" style="left:1083px;top:661px" width="14" height="9" viewBox="0 0 14 9"><path d="M1 1.5 L7 7.5 L13 1.5" fill="none" stroke="#c0c4cc" stroke-width="1.2"/></svg>
  <div class="a cb" style="left:1128px;top:660px"></div>
  <div class="a inp" style="left:1161px;top:649px;width:289px;height:35px"></div>
  <!-- red box 2 -->
  <div class="a" style="left:444px;top:598px;width:1010px;height:95px;border:4px solid #ff1a0a;border-radius:4px"></div>
  <!-- buttons -->
  <div class="a" style="left:1316px;top:700px;width:69px;height:35px;border:1px solid #dcdfe6;border-radius:4px;background:#fff"></div>
  <div class="a" style="left:1316px;top:707px;width:69px;text-align:center;font-size:15px;line-height:20px;color:#606266">关闭</div>
  <div class="a" style="left:1403px;top:700px;width:70px;height:35px;border-radius:4px;background:#409eff"></div>
  <div class="a" style="left:1403px;top:707px;width:70px;text-align:center;font-size:15px;line-height:20px;color:#fff;font-weight:bold">确定</div>
</div>

</body></html>
